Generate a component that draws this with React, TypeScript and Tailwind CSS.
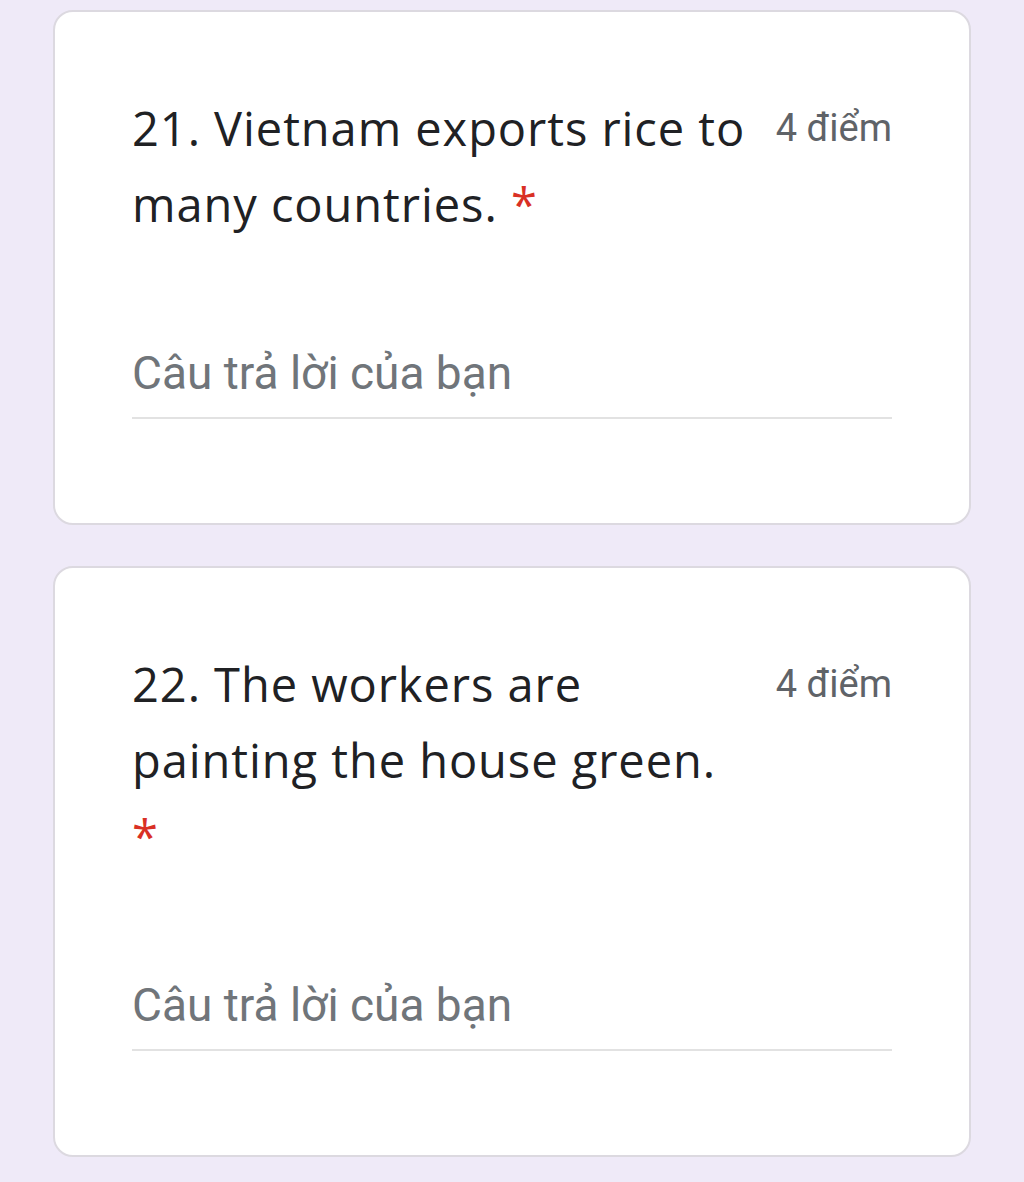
const questions = [
  { id: 21, text: "21. Vietnam exports rice to many countries.", points: "4 điểm" },
  { id: 22, text: "22. The workers are painting the house green.", points: "4 điểm" },
];

function QuestionCard({ text, points }: { text: string; points: string }) {
  return (
    <div className="rounded-[20px] border-2 border-[#dcd9e0] bg-white px-[77px] pt-[78px] pb-[104px]">
      <div className="flex items-start gap-[20px]">
        <div
          className="flex-1 text-[47px] leading-[76px] tracking-[0.02em] text-[#202124]"
          style={{ fontFamily: "'Open Sans', 'Noto Sans', sans-serif" }}
        >
          {text} <span className="text-[#d93025]">*</span>
        </div>
        <div
          className="mt-[18px] text-[38px] leading-[40px] text-[#5f6368]"
          style={{ fontFamily: "Roboto, sans-serif" }}
        >
          {points}
        </div>
      </div>
      <div className="mt-[107px] border-b-2 border-[#e2e2e2] pb-[20px]">
        <div
          className="text-[46px] leading-[48px] text-[#70757a]"
          style={{ fontFamily: "Roboto, sans-serif" }}
        >
          Câu trả lời của bạn
        </div>
      </div>
    </div>
  );
}

export default function App() {
  return (
    <div className="min-h-[1182px] bg-[#efeaf8] px-[53px] pt-[10px] pb-6">
      <div className="flex w-[918px] flex-col gap-[41px]">
        {questions.map((q) => (
          <QuestionCard key={q.id} text={q.text} points={q.points} />
        ))}
      </div>
    </div>
  );
}
